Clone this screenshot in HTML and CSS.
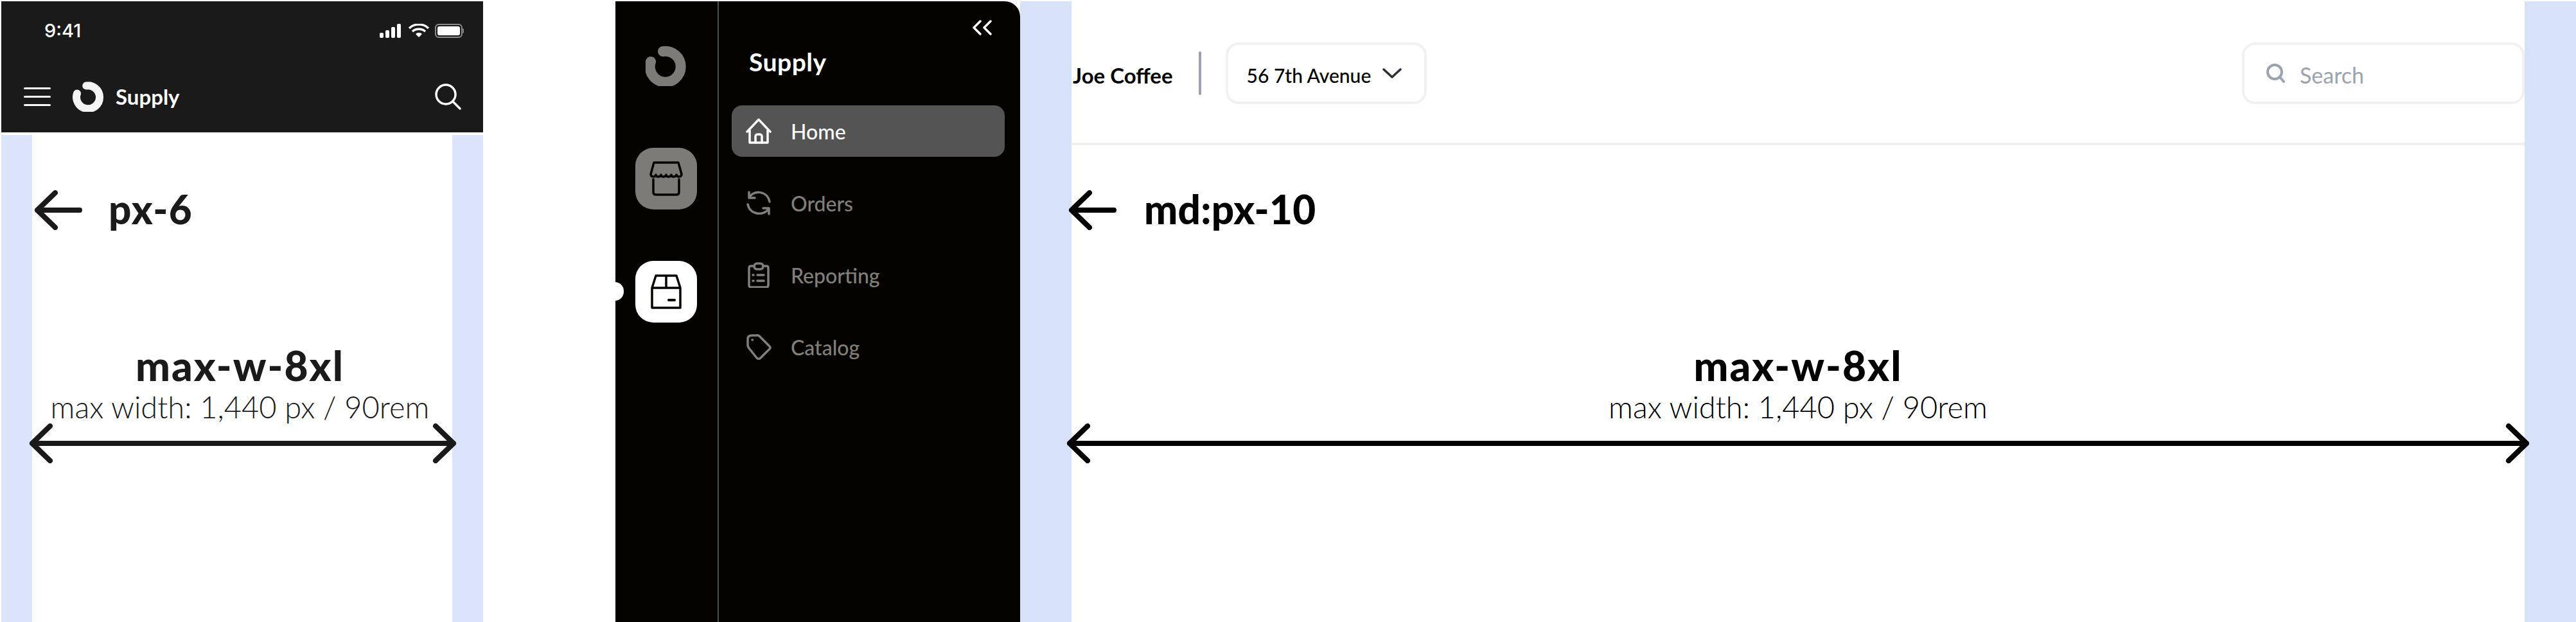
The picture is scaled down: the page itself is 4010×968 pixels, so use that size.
FILE: index.html
```html
<!DOCTYPE html>
<html lang="en">

<head>
  <meta charset="UTF-8">
  <meta name="viewport" content="width=device-width, initial-scale=1.0">
  <title>Supply layout</title>
  <link rel="stylesheet" href="styles.css">
</head>

<body>
  <!-- mobile -->
  <section class="phone">
    <div class="phone-head">
      <div class="status">
        <span class="time">9:41</span>
        <svg class="status-icons" width="131" height="22" viewBox="0 0 131 22">
          <rect x="0" y="14" width="6" height="8" rx="2" fill="#fff" />
          <rect x="9" y="10" width="6" height="12" rx="2" fill="#fff" />
          <rect x="18" y="5" width="6" height="17" rx="2" fill="#fff" />
          <rect x="27" y="0" width="6" height="22" rx="2" fill="#fff" />
          <path d="M46 7 C54 -1 68 -1 76 7 M51 12 C56 7 66 7 71 12" fill="none" stroke="#fff" stroke-width="3.5" />
          <path d="M56 16 C59 13 63 13 66 16 L61 21 Z" fill="#fff" />
          <rect x="87" y="1" width="41" height="20" rx="5" fill="none" stroke="#8a8a8a" stroke-width="2" />
          <rect x="90" y="4" width="35" height="14" rx="3" fill="#fff" />
          <path d="M129.500 8 C131 9 131 13 129.500 14" fill="none" stroke="#8a8a8a" stroke-width="2" />
        </svg>
      </div>
      <div class="phone-nav">
        <div class="burger"><span></span><span></span><span></span></div>
        <svg class="phone-logo" width="50" height="48" viewBox="0 0 64 64">
          <path d="M27 10 A24 24 0 1 1 8 26" fill="none" stroke="#f4f4f4" stroke-width="16" stroke-linecap="round" />
        </svg>
        <span class="phone-brand">Supply</span>
        <svg class="phone-search" width="41" height="41" viewBox="0 0 41 41">
          <circle cx="17" cy="17" r="15" fill="none" stroke="#fff" stroke-width="3.500" />
          <path d="M28 28 L39 39" stroke="#fff" stroke-width="3.500" stroke-linecap="round" />
        </svg>
      </div>
    </div>

    <div class="gutter gutter-sm">
      <div class="canvas">
        <div class="pad-note">
          <svg width="75" height="62" viewBox="0 0 75 62">
            <path d="M71 31 H5 M33 4 L5 31 L33 58" fill="none" stroke="#1a1a1a" stroke-width="8" stroke-linecap="round" stroke-linejoin="round" />
          </svg>
          <span class="note-sm">px-6</span>
        </div>
        <div class="width-note width-sm">
          <h2>max-w-8xl</h2>
          <p>max width: 1,440 px / 90rem</p>
        </div>
        <svg class="span-arrow span-sm" width="666" height="62" viewBox="0 0 666 62">
          <path d="M5 31 H661 M33 4 L5 31 L33 58 M633 4 L661 31 L633 58" fill="none" stroke="#1a1a1a" stroke-width="8" stroke-linecap="round" stroke-linejoin="round" />
        </svg>
      </div>
    </div>
  </section>

  <!-- sidebar -->
  <aside class="sidebar">
    <div class="rail">
      <svg class="rail-logo" width="64" height="64" viewBox="0 0 64 64">
        <path d="M27 10 A24 24 0 1 1 8 26" fill="none" stroke="#7c7b78" stroke-width="16" stroke-linecap="round" />
      </svg>
      <div class="tile tile-store">
        <svg width="52" height="54" viewBox="0 0 52 54" fill="none" stroke="#040300" stroke-width="3.500" stroke-linecap="round" stroke-linejoin="round">
          <path d="M7 2 H45 L50 20 C50 25 43 25 42 21 C41 25 34 25 34 21 C33 25 26 25 26 21 C25 25 18 25 18 21 C17 25 10 25 10 21 C9 25 2 25 2 20 Z" />
          <path d="M6 28 V48 Q6 52 10 52 H42 Q46 52 46 48 V28" />
        </svg>
      </div>
      <div class="tile tile-box">
        <svg width="48" height="54" viewBox="0 0 48 54" fill="none" stroke="#040300" stroke-width="3.500" stroke-linejoin="round">
          <path d="M2 21 L8 2 H40 L46 21 V52 H2 Z M2 21 H46 M24 2 V21" />
          <path d="M28 40 H37" stroke-width="4" stroke-linecap="round" />
        </svg>
      </div>
    </div>

    <div class="panel">
      <svg class="collapse" width="30" height="24" viewBox="0 0 30 24" fill="none" stroke="#fff" stroke-width="3.500" stroke-linecap="round" stroke-linejoin="round">
        <path d="M12 2 L2 12 L12 22 M28 2 L18 12 L28 22" />
      </svg>
      <h1 class="panel-title">Supply</h1>
      <ul class="nav">
        <li class="nav-item active">
          <svg width="40" height="40" viewBox="0 0 40 40" fill="none" stroke="#fff" stroke-width="3.500" stroke-linecap="round" stroke-linejoin="round">
            <path d="M2 21 L20 2 L38 21 M6 19 V38 H34 V19" />
            <path d="M15 38 V28 Q15 25 20 25 Q25 25 25 28 V38" />
          </svg>
          Home
        </li>
        <li class="nav-item">
          <svg width="40" height="40" viewBox="0 0 40 40" fill="none" stroke="#807f7c" stroke-width="3.500" stroke-linecap="round" stroke-linejoin="round">
            <path d="M5 3 V12 H14 M5 12 C10 0 33 -1 37 18" />
            <path d="M36 37 V28 H27 M36 28 C30 40 7 40 3 22" />
          </svg>
          Orders
        </li>
        <li class="nav-item">
          <svg width="40" height="40" viewBox="0 0 40 40" fill="none" stroke="#807f7c" stroke-width="3.500" stroke-linecap="round" stroke-linejoin="round">
            <path d="M13 6 H8 Q5 6 5 9 V36 Q5 39 8 39 H32 Q35 39 35 36 V9 Q35 6 32 6 H27" />
            <rect x="13" y="2" width="14" height="9" rx="4.500" />
            <path d="M11 20 H12 M11 29 H12 M18 20 H28 M18 29 H28" />
          </svg>
          Reporting
        </li>
        <li class="nav-item">
          <svg width="40" height="40" viewBox="0 0 40 40" fill="none" stroke="#807f7c" stroke-width="3.500" stroke-linecap="round" stroke-linejoin="round">
            <path d="M3 8 Q3 2 9 2 H16 Q20 1 23 5 L37 19 Q39 21 37 23 L23 37 Q20 40 17 37 L5 22 Q3 20 3 17 Z" />
            <path d="M10 9 H10.500" />
          </svg>
          Catalog
        </li>
      </ul>
    </div>
  </aside>

  <!-- desktop -->
  <main class="gutter gutter-lg">
    <div class="canvas">
      <header class="topbar">
        <span class="company">Joe Coffee</span>
        <span class="bar-line"></span>
        <div class="location">
          <span class="field-text">56 7th Avenue</span>
          <svg width="30" height="16" viewBox="0 0 30 16" fill="none" stroke="#2b2e38" stroke-width="3.500" stroke-linecap="round" stroke-linejoin="round">
            <path d="M2 2 L15 14 L28 2" />
          </svg>
        </div>
        <div class="search">
          <svg width="30" height="30" viewBox="0 0 30 30" fill="none" stroke="#9ca3af" stroke-width="4" stroke-linecap="round">
            <circle cx="13" cy="13" r="11" />
            <path d="M21 21 L27 28" />
          </svg>
          <span class="field-text">Search</span>
        </div>
      </header>
      <div class="pad-note pad-note-lg">
        <svg width="75" height="62" viewBox="0 0 75 62">
          <path d="M71 31 H5 M33 4 L5 31 L33 58" fill="none" stroke="#000" stroke-width="8" stroke-linecap="round" stroke-linejoin="round" />
        </svg>
        <span class="note-lg">md:px-10</span>
      </div>
      <div class="width-note width-lg">
        <h2>max-w-8xl</h2>
        <p>max width: 1,440 px / 90rem</p>
      </div>
      <svg class="span-arrow span-lg" width="2278" height="62" viewBox="0 0 2278 62">
        <path d="M5 31 H2273 M33 4 L5 31 L33 58 M2245 4 L2273 31 L2245 58" fill="none" stroke="#000" stroke-width="8" stroke-linecap="round" stroke-linejoin="round" />
      </svg>
    </div>
  </main>
</body>

</html>
```

FILE: styles.css
```css
* {
  margin: 0;
  padding: 0;
  box-sizing: border-box;
  list-style: none;
}

html,
body {
  height: 968px;
  overflow: hidden;
}

body {
  display: flex;
  padding-top: 2px;
  background: #fff;
  color: #000;
  font-family: "Lato", "Liberation Sans", sans-serif;
}

svg {
  display: block;
  flex: none;
}

/* mobile frame */
.phone {
  width: 750px;
  margin-left: 2px;
  display: flex;
  flex: none;
  flex-direction: column;
  color: #1a1a1a;
}

.phone-head {
  height: 204px;
  background: #1a1a1a;
  color: #fff;
  margin-bottom: 4px;
}

.status {
  display: flex;
  align-items: center;
  justify-content: space-between;
  height: 22px;
  margin: 35px 30px 0 67px;
}

.time {
  font-family: "Inter", sans-serif;
  font-size: 29px;
  font-weight: 500;
  line-height: 22px;
}

.phone-nav {
  display: flex;
  align-items: center;
  margin-top: 67px;
  padding: 0 34px 0 35px;
}

.burger {
  display: flex;
  flex-direction: column;
  gap: 10px;
  width: 42px;
}

.burger span {
  height: 3px;
  background: #fff;
  border-radius: 2px;
}

.phone-logo {
  margin-left: 34px;
}

.phone-brand {
  margin-left: 17px;
  font-size: 33px;
  font-weight: 700;
}

.phone-search {
  margin-left: auto;
}

/* blue padding columns */
.gutter {
  flex: 1;
  min-width: 0;
  display: flex;
}

.gutter-sm {
  padding: 0 48px;
  background: #dce4fc;
}

.gutter-lg {
  padding: 0 80px;
  background: #d7e2f9;
}

.canvas {
  flex: 1;
  min-width: 0;
  background: #fff;
}

.pad-note {
  display: flex;
  align-items: center;
  margin: 86px 0 0 3px;
}

.pad-note span {
  margin-top: -4px;
  font-weight: 900;
  font-size: 62px;
  line-height: 62px;
}

.note-sm {
  margin-left: 41px;
  letter-spacing: 1.5px;
}

.note-lg {
  margin-left: 43px;
  letter-spacing: 0.3px;
}

.pad-note-lg {
  margin: 70px 0 0 -5px;
}

.width-note {
  text-align: center;
}

.width-note h2 {
  font-size: 64px;
  line-height: 60px;
  font-weight: 900;
  letter-spacing: 2px;
}

.width-note p {
  margin-top: 8px;
  font-size: 47px;
  line-height: 52px;
  font-weight: 300;
}

.width-sm {
  margin: 181px 7px 0 0;
}

.width-lg {
  margin-top: 181px;
}

.span-sm {
  margin-left: -5px;
}

.span-lg {
  margin-left: -8px;
}

/* sidebar */
.sidebar {
  width: 630px;
  margin-left: 206px;
  display: flex;
  flex: none;
  background: #040300;
  border-top-right-radius: 24px;
}

.rail {
  width: 161px;
  border-right: 2px solid #4b5050;
  display: flex;
  flex-direction: column;
  align-items: center;
  padding-right: 1px;
}

.rail-logo {
  margin-top: 68px;
}

.tile {
  width: 96px;
  height: 96px;
  border-radius: 28px;
  display: flex;
  align-items: center;
  justify-content: center;
}

.tile-store {
  margin-top: 96px;
  background: #7c7b78;
}

.tile-box {
  position: relative;
  margin-top: 80px;
  background: #fff;
}

.tile-box::before {
  content: "";
  position: absolute;
  left: -32px;
  top: 33px;
  width: 14px;
  height: 29px;
  background: #fff;
  border-radius: 0 15px 15px 0;
}

.panel {
  flex: 1;
  padding: 0 24px 0 20px;
}

.collapse {
  margin: 29px 20px 0 auto;
}

.panel-title {
  margin: 18px 0 0 27px;
  font-size: 39px;
  line-height: 46px;
  font-weight: 700;
  color: #fff;
  letter-spacing: 0.5px;
}

.nav {
  margin-top: 45px;
}

.nav-item {
  display: flex;
  align-items: center;
  gap: 30px;
  height: 80px;
  margin-bottom: 32px;
  padding-left: 22px;
  border-radius: 16px;
  font-size: 32px;
  font-weight: 500;
  color: #807f7c;
}

.nav-item.active {
  background: #545454;
  color: #fff;
}

/* desktop top bar */
.topbar {
  display: flex;
  align-items: center;
  height: 224px;
  padding: 64px 0 60px 2px;
  border-bottom: 4px solid #f1f1f1;
}

.company {
  padding-top: 5px;
  font-size: 33px;
  font-weight: 700;
}

.bar-line {
  width: 4px;
  height: 68px;
  margin: 0 38px 0 40px;
  background: #9ca3af;
  border-radius: 2px;
}

.location {
  display: flex;
  align-items: center;
  gap: 18px;
  width: 313px;
  height: 96px;
  padding-left: 29px;
  border: 4px solid #f1f1f1;
  border-radius: 20px;
  font-size: 30px;
  font-weight: 500;
}

.field-text {
  padding-top: 5px;
}

.search {
  display: flex;
  align-items: center;
  gap: 22px;
  width: 440px;
  height: 96px;
  margin-left: auto;
  padding-left: 34px;
  border: 4px solid #f1f1f1;
  border-radius: 20px;
  font-size: 34px;
  color: #9ca3af;
}
```
